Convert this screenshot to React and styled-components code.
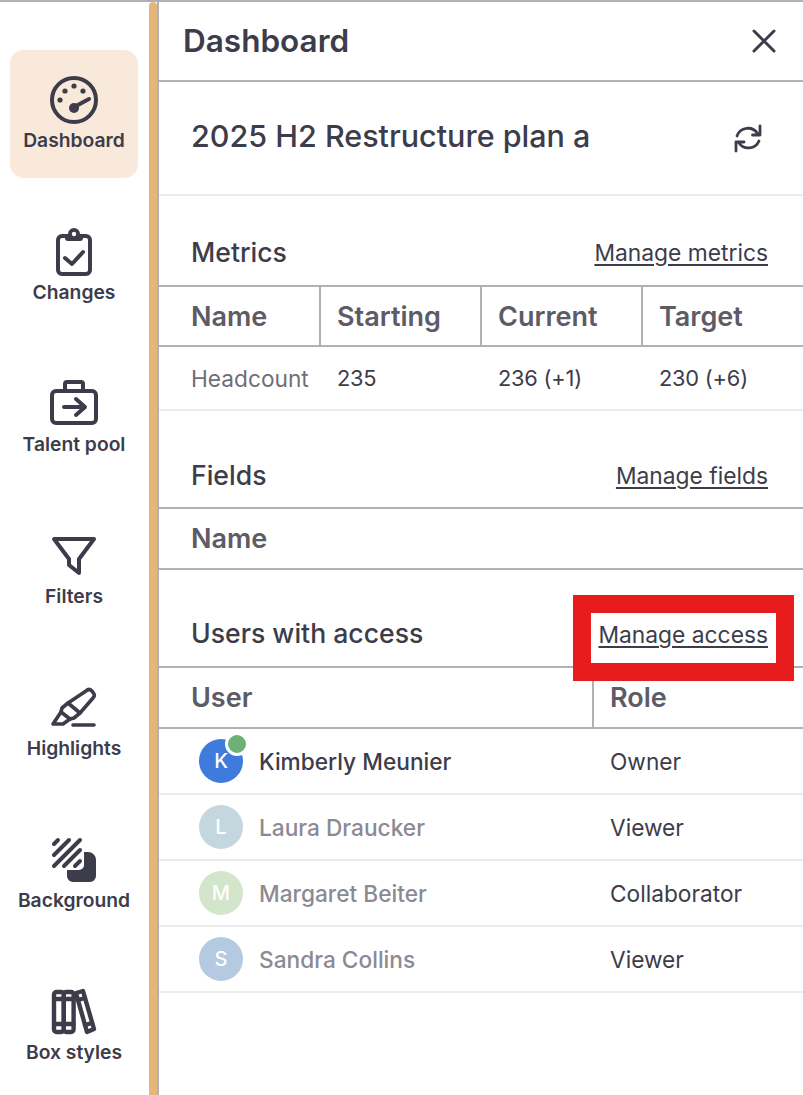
import React from 'react'
import styled, { createGlobalStyle } from 'styled-components'

const ink = '#3d3c4a'
const rule = '#b1b0b6'
const softRule = '#ebebec'

const GlobalStyle = createGlobalStyle`
  html, body { margin: 0; padding: 0; background: #fff; }
  body { font-family: "Inter", "Liberation Sans", sans-serif; color: ${ink}; }
  * { box-sizing: border-box; }
`

const Page = styled.div`
  display: flex;
  height: 1095px;
  overflow: hidden;
  border-top: 2px solid ${rule};
`

const Sidebar = styled.nav`
  width: 149px;
  flex: none;
  padding: 48px 11px 0 10px;
  display: flex;
  flex-direction: column;
  gap: 24px;
`

const NavItem = styled.div`
  height: 128px;
  flex: none;
  border-radius: 14px;
  background: ${p => (p.$active ? '#f9e9da' : 'transparent')};
  display: flex;
  flex-direction: column;
  align-items: center;
  padding-top: 26px;
  svg { display: block; flex: none; }
`

const NavLabel = styled.span`
  font-size: 19.3px;
  font-weight: 600;
  line-height: 24px;
  margin-top: 4px;
  white-space: nowrap;
`

const Divider = styled.div`
  width: 8px;
  flex: none;
  background: #e5b677;
  border-radius: 4px 4px 0 0;
`

const Panel = styled.main`
  flex: 1;
  min-width: 0;
  border-left: 2px solid ${rule};
`

const PanelHeader = styled.header`
  height: 80px;
  display: flex;
  align-items: center;
  justify-content: space-between;
  padding: 0 27px 0 24px;
  border-bottom: 2px solid ${rule};
`

const PanelTitle = styled.h1`
  margin: 0 0 2px;
  font-size: 31.5px;
  font-weight: 600;
`

const PlanRow = styled.div`
  height: 114px;
  display: flex;
  align-items: center;
  justify-content: space-between;
  padding: 0 40px 0 32px;
  border-bottom: 2px solid ${softRule};
`

const PlanName = styled.h2`
  margin: 0 0 6px;
  font-size: 30.5px;
  font-weight: 500;
`

const SectionHead = styled.div`
  height: ${p => p.$h}px;
  display: flex;
  align-items: center;
  justify-content: space-between;
  padding: ${p => p.$pad}px 35px 0 32px;
  border-bottom: 2px solid ${rule};
`

const SectionTitle = styled.h3`
  margin: 0;
  font-size: 26.6px;
  font-weight: 500;
`

const ManageLink = styled.a`
  position: relative;
  display: inline-block;
  margin-top: ${p => p.$drop ?? 2}px;
  line-height: 28px;
  font-size: 22.8px;
  color: ${ink};
  text-decoration: underline;
  text-decoration-thickness: 2px;
  text-underline-offset: 3px;
`

const Callout = styled.span`
  position: absolute;
  left: -25px;
  right: -26px;
  top: -26px;
  bottom: -32px;
  border: 18px solid #e81c1c;
`

const Row = styled.div`
  display: grid;
  grid-template-columns: ${p => p.$cols};
  height: ${p => p.$h}px;
  border-bottom: 2px solid ${p => (p.$soft ? softRule : rule)};
`

const HeadCell = styled.div`
  display: flex;
  align-items: center;
  padding-left: ${p => (p.$first ? 32 : 16)}px;
  font-size: 27px;
  font-weight: 600;
  color: #5c5b66;
  border-left: ${p => (p.$first ? 0 : `2px solid ${rule}`)};
`

const Cell = styled.div`
  display: flex;
  align-items: center;
  gap: 16px;
  padding-left: ${p => p.$pad ?? 18}px;
  font-size: ${p => (p.$num ? 21.8 : 22.7)}px;
  letter-spacing: ${p => (p.$num ? '-0.2px' : 0)};
  color: ${p => p.$color || ink};
  white-space: nowrap;
`

const Avatar = styled.span`
  position: relative;
  width: 44px;
  height: 44px;
  border-radius: 50%;
  flex: none;
  background: ${p => p.$bg};
  color: #fff;
  display: flex;
  align-items: center;
  justify-content: center;
  font-size: 20px;
  font-weight: 500;
`

const Presence = styled.span`
  position: absolute;
  top: -7px;
  right: -6px;
  width: 24px;
  height: 24px;
  border-radius: 50%;
  background: #6db177;
  border: 3px solid #fff;
`

const UserName = styled.span`
  font-size: 22.7px;
  font-weight: 500;
  color: ${p => (p.$online ? ink : '#8b8a93')};
`

const GaugeIcon = () => (
  <svg width="48" height="48" viewBox="0 0 48 48" fill="none" stroke={ink} strokeWidth="4" strokeLinecap="round">
    <circle cx="24" cy="24" r="22" />
    <g fill={ink} stroke="none">
      <circle cx="10" cy="24" r="2.6" />
      <circle cx="15" cy="15" r="2.6" />
      <circle cx="24" cy="10" r="2.6" />
      <circle cx="33" cy="15" r="2.6" />
      <circle cx="24" cy="32" r="5" />
    </g>
    <path d="M26 30 39 23" />
  </svg>
)

const ClipboardIcon = () => (
  <svg width="48" height="48" viewBox="0 0 48 48" fill="none" stroke={ink} strokeWidth="4" strokeLinecap="round" strokeLinejoin="round">
    <rect x="8" y="8" width="32" height="38" rx="4" />
    <path d="M15 30 22 36 33 24" />
    <path fill={ink} stroke="none" d="M15 6h3a6 6 0 0 1 12 0h3v4a3 3 0 0 1-3 3H18a3 3 0 0 1-3-3z" />
    <circle cx="24" cy="6" r="2.2" fill="#fff" stroke="none" />
  </svg>
)

const BriefcaseIcon = () => (
  <svg width="48" height="48" viewBox="0 0 48 48" fill="none" stroke={ink} strokeWidth="4" strokeLinecap="round" strokeLinejoin="round">
    <rect x="2" y="11" width="44" height="32" rx="4" />
    <path d="M15 10V4a2 2 0 0 1 2-2h14a2 2 0 0 1 2 2v6" />
    <path d="M14 27H34M26 19 35 27 26 35" />
  </svg>
)

const FilterIcon = () => (
  <svg width="48" height="48" viewBox="0 0 48 48" fill="none" stroke={ink} strokeWidth="4" strokeLinecap="round" strokeLinejoin="round">
    <path d="M4 7H44L29 27V41L19 33V27Z" />
  </svg>
)

const HighlightIcon = () => (
  <svg width="48" height="48" viewBox="0 0 48 48" fill="none" stroke={ink} strokeWidth="3.6" strokeLinecap="round" strokeLinejoin="round">
    <path d="M36 7Q39 4 42 7L44 10Q45 12 43 14L30 29 18 19Z" />
    <path d="M18 19 12 24 11 28 20 35 24 34 30 29" />
    <path d="M11 28 3 40H13L20 35" />
    <path d="M23 41H44" />
  </svg>
)

const SwatchIcon = () => (
  <svg width="48" height="48" viewBox="0 0 48 48" fill="none" stroke={ink} strokeWidth="4" strokeLinecap="round">
    <path fill={ink} stroke="none" d="M34 16H38A8 8 0 0 1 46 24V40A6 6 0 0 1 40 46H23A6 6 0 0 1 17 40V34H29A5 5 0 0 0 34 29Z" />
    <path d="M4 8 8 4M4 19 19 4M4 30 30 4M14 30 30 14M25 30 30 25" />
  </svg>
)

const BooksIcon = () => (
  <svg width="48" height="48" viewBox="0 0 48 48" fill="none" stroke={ink} strokeWidth="4.4" strokeLinecap="round" strokeLinejoin="round">
    <rect x="4" y="4" width="9.8" height="40" rx="2.5" />
    <rect x="13.8" y="4" width="9.8" height="40" rx="2.5" />
    <path d="M4 11H23.6M4 36H23.6" />
    <path d="M26 5 33 3 44 41 37 44Z" />
    <path d="M28 12 35 10M35 37 42 35" />
  </svg>
)

const RefreshIcon = () => (
  <svg width="30" height="30" viewBox="0 0 30 30" fill="none" stroke={ink} strokeWidth="2.8" strokeLinecap="round" strokeLinejoin="round">
    <path d="M4 13A11.5 11.5 0 0 1 24.5 10.5M27 3V12H19.5" />
    <path d="M26 18A11.5 11.5 0 0 1 6 20M3 28V19H11" />
  </svg>
)

const CloseIcon = () => (
  <svg width="24" height="24" viewBox="0 0 24 24" fill="none" stroke={ink} strokeWidth="3" strokeLinecap="round">
    <path d="M2 2 22 22M22 2 2 22" />
  </svg>
)

const navItems = [
  { label: 'Dashboard', Icon: GaugeIcon, active: true },
  { label: 'Changes', Icon: ClipboardIcon },
  { label: 'Talent pool', Icon: BriefcaseIcon },
  { label: 'Filters', Icon: FilterIcon },
  { label: 'Highlights', Icon: HighlightIcon },
  { label: 'Background', Icon: SwatchIcon },
  { label: 'Box styles', Icon: BooksIcon },
]

const users = [
  { name: 'Kimberly Meunier', role: 'Owner', bg: '#3f7bdc', online: true },
  { name: 'Laura Draucker', role: 'Viewer', bg: '#c5d7de' },
  { name: 'Margaret Beiter', role: 'Collaborator', bg: '#d3e5ca' },
  { name: 'Sandra Collins', role: 'Viewer', bg: '#b3cae0' },
]

const metricCols = '160px 161px 161px 162px'
const userCols = '433px 1fr'

export default function App() {
  return (
    <>
      <GlobalStyle />
      <Page>
        <Sidebar>
          {navItems.map(({ label, Icon, active }) => (
            <NavItem key={label} $active={active}>
              <Icon />
              <NavLabel>{label}</NavLabel>
            </NavItem>
          ))}
        </Sidebar>
        <Divider />
        <Panel>
          <PanelHeader>
            <PanelTitle>Dashboard</PanelTitle>
            <CloseIcon />
          </PanelHeader>
          <PlanRow>
            <PlanName>2025 H2 Restructure plan a</PlanName>
            <RefreshIcon />
          </PlanRow>
          <SectionHead $h={91} $pad={22}>
            <SectionTitle>Metrics</SectionTitle>
            <ManageLink>Manage metrics</ManageLink>
          </SectionHead>
          <Row $cols={metricCols} $h={60}>
            <HeadCell $first>Name</HeadCell>
            <HeadCell>Starting</HeadCell>
            <HeadCell>Current</HeadCell>
            <HeadCell>Target</HeadCell>
          </Row>
          <Row $cols={metricCols} $h={64} $soft>
            <Cell $pad={32} $color="#6f6e79">Headcount</Cell>
            <Cell $num>235</Cell>
            <Cell $num>236 (+1)</Cell>
            <Cell $num>230 (+6)</Cell>
          </Row>
          <SectionHead $h={98} $pad={32}>
            <SectionTitle>Fields</SectionTitle>
            <ManageLink>Manage fields</ManageLink>
          </SectionHead>
          <Row $cols="1fr" $h={61}>
            <HeadCell $first>Name</HeadCell>
          </Row>
          <SectionHead $h={98} $pad={30}>
            <SectionTitle>Users with access</SectionTitle>
            <ManageLink $drop={4}>
              Manage access
              <Callout />
            </ManageLink>
          </SectionHead>
          <Row $cols={userCols} $h={61}>
            <HeadCell $first>User</HeadCell>
            <HeadCell>Role</HeadCell>
          </Row>
          {users.map(u => (
            <Row key={u.name} $cols={userCols} $h={66} $soft>
              <Cell $pad={40}>
                <Avatar $bg={u.bg}>
                  {u.name[0]}
                  {u.online && <Presence />}
                </Avatar>
                <UserName $online={u.online}>{u.name}</UserName>
              </Cell>
              <Cell>{u.role}</Cell>
            </Row>
          ))}
        </Panel>
      </Page>
    </>
  )
}
